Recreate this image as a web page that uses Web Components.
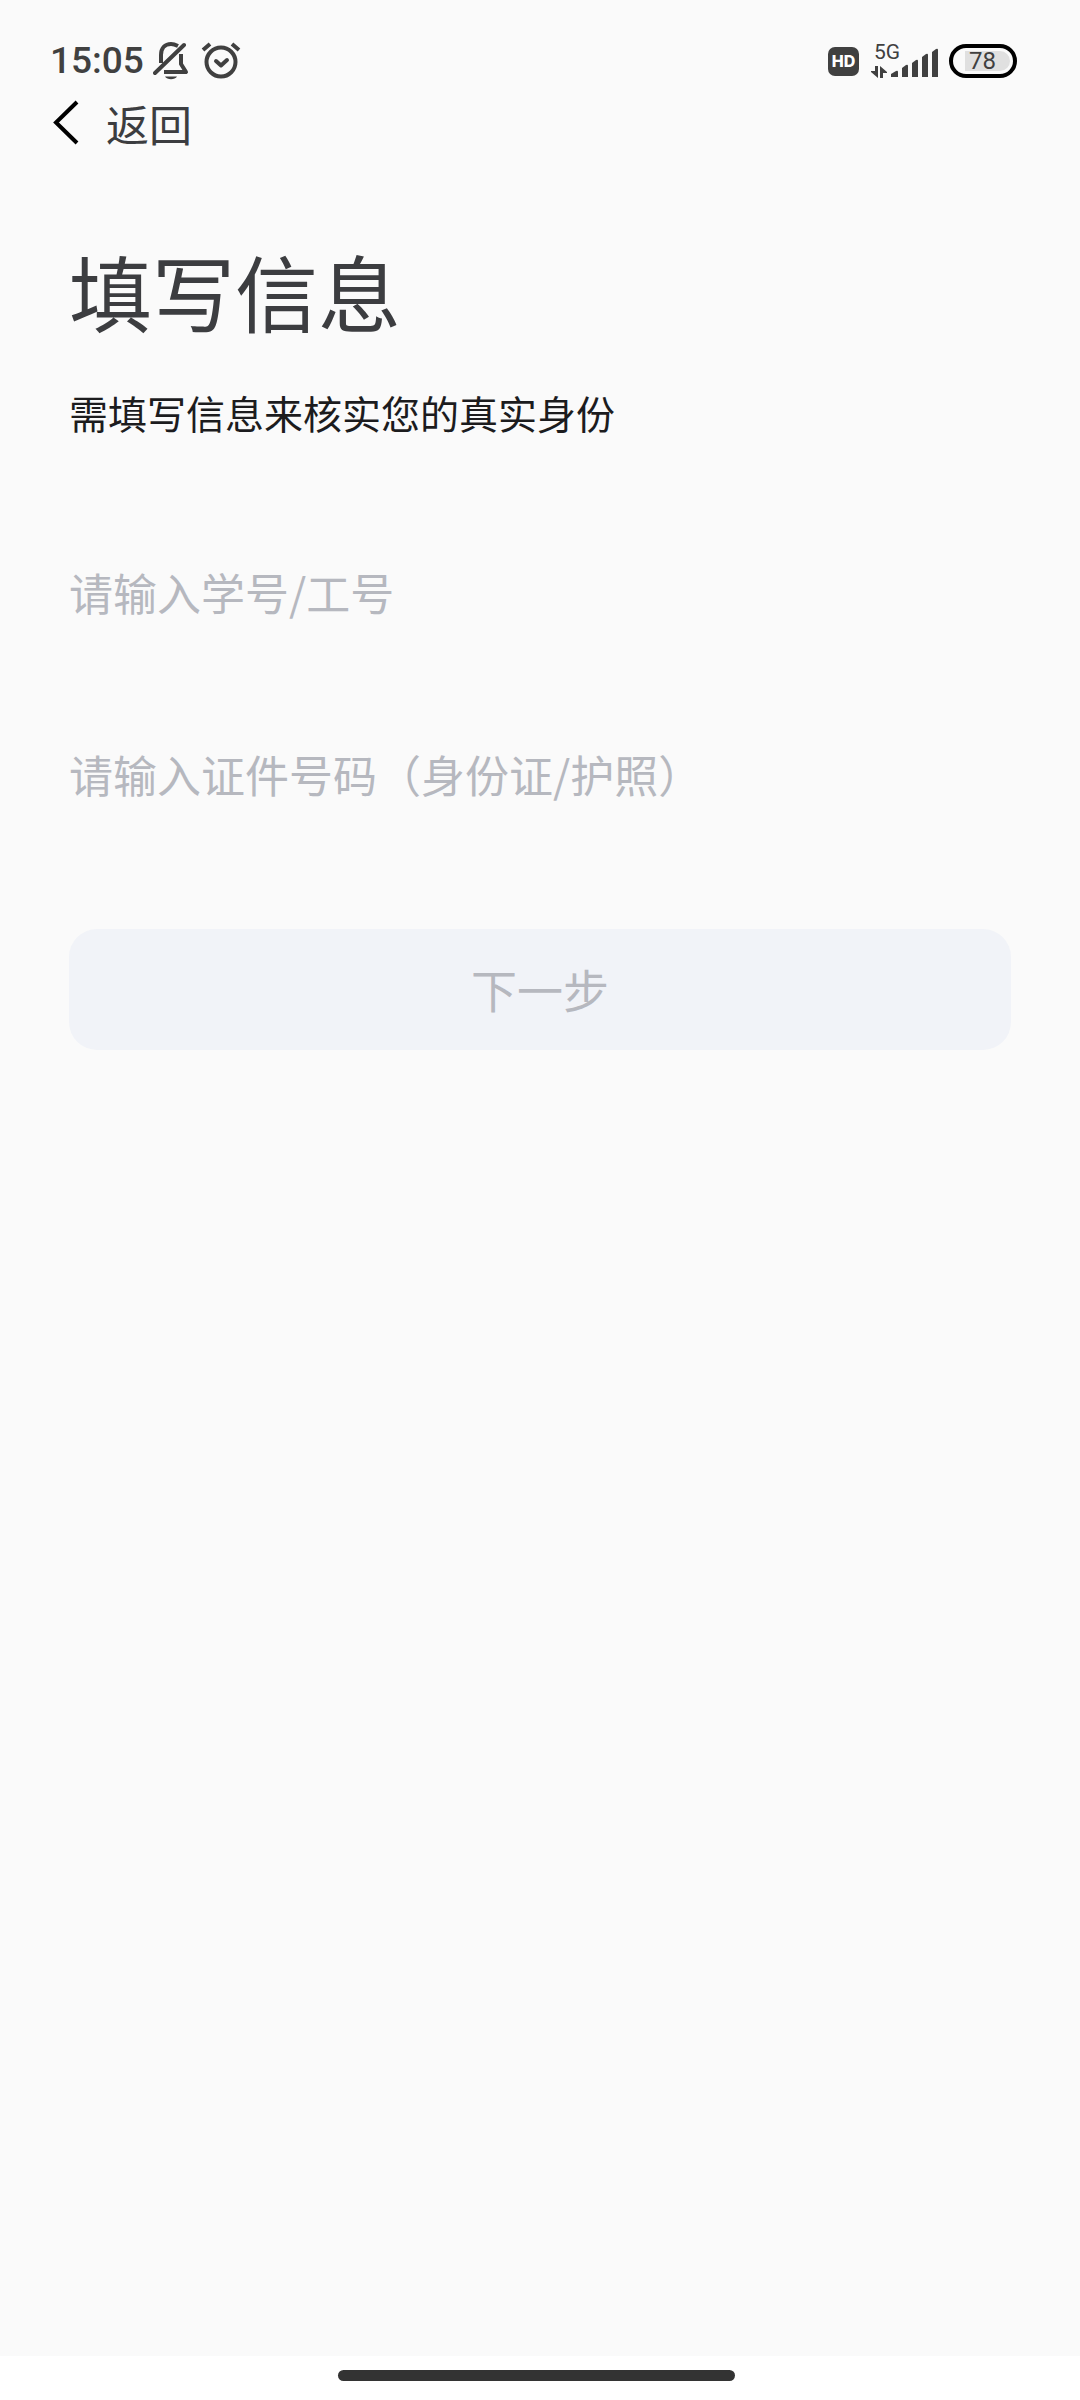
<!DOCTYPE html>
<html lang="zh-CN">
<head>
<meta charset="UTF-8">
<meta name="viewport" content="width=device-width, initial-scale=1.0">
<title>填写信息</title>
<style>
  body {
    margin: 0;
    background-color: #fafafa;
    font-family: "Noto Sans CJK SC", sans-serif;
  }
</style>
</head>
<body>
<verify-page>
  <status-bar slot="top" time="15:05" battery="78"></status-bar>
  <back-bar slot="top">返回</back-bar>
  <page-heading>
    填写信息
    <span slot="note">需填写信息来核实您的真实身份</span>
  </page-heading>
  <text-field name="account" label="请输入学号/工号"></text-field>
  <text-field name="idcard" label="请输入证件号码（身份证/护照）"></text-field>
  <next-button>下一步</next-button>
  <home-bar slot="bottom"></home-bar>
</verify-page>

<script>
class VerifyPage extends HTMLElement {
  connectedCallback() {
    this.attachShadow({ mode: "open" });
    this.shadowRoot.innerHTML = `
      <style>
        :host {
          display: flex;
          flex-direction: column;
          min-height: 100vh;
        }

        main {
          flex: 1;
          padding: 76px 69px 0;
        }
      </style>

      <slot name="top"></slot>
      <main><slot></slot></main>
      <slot name="bottom"></slot>
    `;
  }
}

class StatusBar extends HTMLElement {
  connectedCallback() {
    this.attachShadow({ mode: "open" });
    this.shadowRoot.innerHTML = `
      <style>
        :host {
          display: flex;
          justify-content: space-between;
          align-items: center;
          height: 42px;
          padding: 40px 63px 0 50px;
          color: #404040;
          font-family: Roboto, sans-serif;
        }

        div {
          display: flex;
          align-items: center;
        }

        svg {
          display: block;
        }

        time {
          font-size: 37px;
          line-height: 42px;
          font-weight: 500;
        }

        .left {
          gap: 9px;
        }

        .left svg + svg {
          margin-left: 3px;
        }

        .hd {
          width: 31px;
          height: 29px;
          margin-right: 12px;
          justify-content: center;
          border-radius: 7px;
          background-color: #404040;
          color: #fff;
          font-family: Inter, sans-serif;
          font-size: 16px;
          line-height: 29px;
          font-weight: 800;
        }

        .battery {
          box-sizing: border-box;
          width: 68px;
          height: 34px;
          margin-left: 10px;
          padding: 3px 3px 3px 12px;
          border: 4px solid #000;
          border-radius: 17px;
        }

        .level {
          flex: 1;
          height: 20px;
          padding-left: 4px;
          border-radius: 0 10px 10px 0;
          background-color: #e0e0e0;
          font-size: 24px;
          line-height: 20px;
        }
      </style>

      <div class="left">
        <time>${this.getAttribute("time")}</time>
        <svg width="36" height="38" viewBox="0 0 36 38" fill="none" stroke="#404040" stroke-width="4" stroke-linejoin="round" aria-label="静音">
          <path d="M8 21V13C8 6 12 2 18 2C21 2 23 3 25 4"/>
          <path d="M2 31L31 3" stroke-linecap="round"/>
          <path d="M28 12V22L33 30H11"/>
          <path d="M12 34.500H24C22 38 14 38 12 34.500Z" fill="#404040" stroke="none"/>
        </svg>
        <svg width="40" height="38" viewBox="0 0 40 38" fill="none" stroke="#404040" stroke-width="4" stroke-linecap="round" stroke-linejoin="round" aria-label="闹钟">
          <circle cx="20" cy="20" r="14.500"/>
          <path d="M15 19L20 23.500L26 18"/>
          <path d="M2 8L9 2M31 2L38 8" stroke-linecap="butt"/>
        </svg>
      </div>

      <div>
        <div class="hd">HD</div>
        <svg width="68" height="46" viewBox="0 -5 68 46" fill="#404040" aria-label="信号">
          <text x="3" y="16" font-size="21">5G</text>
          <path d="M4 23H7V35L0 29V28H4ZM9 35V23L16 29V30H12V35Z"/>
          <path d="M20 34V31L25 28Q27 27 27 29V34Z"/>
          <path d="M31 34V25L35 22Q37 21 37 23V34Z"/>
          <path d="M41 34V20L45 17Q47 16 47 18V34Z"/>
          <path d="M51 34V14L55 11Q57 10 57 12V34Z"/>
          <path d="M61 34V9L65 6Q67 5 67 7V34Z"/>
        </svg>
        <div class="battery"><span class="level">${this.getAttribute("battery")}</span></div>
      </div>
    `;
  }
}

class BackBar extends HTMLElement {
  connectedCallback() {
    this.attachShadow({ mode: "open" });
    this.shadowRoot.innerHTML = `
      <style>
        :host {
          display: flex;
          height: 82px;
          padding: 0 52px;
        }

        button {
          display: flex;
          align-items: center;
          gap: 26px;
          padding: 0;
          border: none;
          background: none;
          color: #3c3d40;
          font-family: inherit;
          font-size: 43px;
          line-height: 60px;
          cursor: pointer;
        }
      </style>

      <button type="button">
        <svg width="28" height="46" viewBox="0 0 28 46" fill="none" stroke="#000" stroke-width="4">
          <path d="M25 2L4 22.500L25 43"/>
        </svg>
        <slot></slot>
      </button>
    `;
  }
}

class PageHeading extends HTMLElement {
  connectedCallback() {
    this.attachShadow({ mode: "open" });
    this.shadowRoot.innerHTML = `
      <style>
        :host {
          display: block;
          margin-bottom: 110px;
        }

        h1 {
          margin: 0 0 42px;
          color: #3c3d40;
          font-size: 83px;
          line-height: 100px;
          font-weight: 400;
        }

        p {
          margin: 0;
          color: #1c1c1e;
          font-size: 39px;
          line-height: 60px;
        }
      </style>

      <h1><slot></slot></h1>
      <p><slot name="note"></slot></p>
    `;
  }
}

class TextField extends HTMLElement {
  connectedCallback() {
    const label = this.getAttribute("label");

    this.attachShadow({ mode: "open" });
    this.shadowRoot.innerHTML = `
      <style>
        :host {
          display: block;
          margin-bottom: 102px;
        }

        input {
          display: block;
          box-sizing: border-box;
          width: 100%;
          height: 80px;
          padding: 0;
          border: none;
          outline: none;
          background: none;
          color: #3c3d40;
          font-family: inherit;
          font-size: 44px;
        }

        input::placeholder {
          color: #b6b8bf;
          opacity: 1;
        }
      </style>

      <input type="text" name="${this.getAttribute("name")}" placeholder="${label}" aria-label="${label}">
    `;
  }
}

class NextButton extends HTMLElement {
  connectedCallback() {
    this.attachShadow({ mode: "open" });
    this.shadowRoot.innerHTML = `
      <style>
        :host {
          display: block;
          padding-top: 13px;
        }

        button {
          display: block;
          width: 100%;
          height: 121px;
          padding: 0 0 4px;
          border: none;
          border-radius: 28px;
          background-color: #f1f3f8;
          color: #b6b8bf;
          font-family: inherit;
          font-size: 46px;
        }
      </style>

      <button type="button" disabled><slot></slot></button>
    `;
  }
}

class HomeBar extends HTMLElement {
  connectedCallback() {
    this.attachShadow({ mode: "open" });
    this.shadowRoot.innerHTML = `
      <style>
        :host {
          display: flex;
          justify-content: center;
          height: 30px;
          padding: 14px 7px 0 0;
          background-color: #fff;
        }

        span {
          width: 37%;
          height: 11px;
          border-radius: 6px;
          background-color: #333;
        }
      </style>

      <span></span>
    `;
  }
}

customElements.define("verify-page", VerifyPage);
customElements.define("status-bar", StatusBar);
customElements.define("back-bar", BackBar);
customElements.define("page-heading", PageHeading);
customElements.define("text-field", TextField);
customElements.define("next-button", NextButton);
customElements.define("home-bar", HomeBar);
</script>
</body>
</html>
